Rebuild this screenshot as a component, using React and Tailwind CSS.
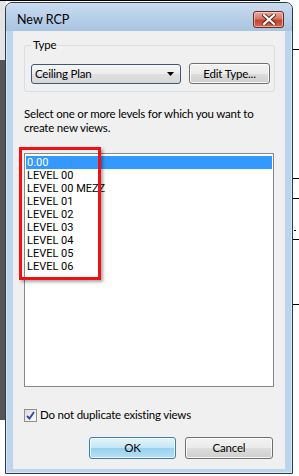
import React from "react";

const ui = { fontFamily: 'Lato, "Noto Sans", sans-serif' };
const listFont = { fontFamily: 'Roboto, "Liberation Sans", sans-serif' };

function Btn({ children, primary, className = "" }) {
  return (
    <div
      className={
        "flex items-center justify-center rounded-[3px] border text-black " +
        (primary
          ? "border-[#3c7fb1] bg-[linear-gradient(#e5f4fc_0%,#c4e5f6_50%,#98d1ef_51%,#b7e0f5_100%)] shadow-[inset_0_0_0_1px_rgba(255,255,255,0.7)] "
          : "border-[#707070] bg-[linear-gradient(#f2f2f2_0%,#ebebeb_50%,#dddddd_51%,#cfcfcf_100%)] shadow-[inset_0_0_0_1px_rgba(255,255,255,0.8)] ") +
        className
      }
    >
      {children}
    </div>
  );
}

export default function App() {
  const levels = [
    "0.00",
    "LEVEL 00",
    "LEVEL 00 MEZZ",
    "LEVEL 01",
    "LEVEL 02",
    "LEVEL 03",
    "LEVEL 04",
    "LEVEL 05",
    "LEVEL 06",
  ];
  return (
    <div className="relative h-[476px] w-[299px] overflow-hidden bg-white text-[11.5px] tracking-[-0.2px]" style={ui}>
      {/* desktop background pieces */}
      <div className="absolute left-0 top-0 h-[60px] w-[6px] bg-[#e4e4e4]" />
      <div className="absolute left-0 top-[60px] h-[360px] w-[6px] bg-[#575757]" />
      <div className="absolute left-0 top-0 h-px w-[280px] bg-black" />
      <div className="absolute right-0 top-[49px] h-px w-[7px] bg-black" />
      <div className="absolute right-0 top-[178px] h-px w-[7px] bg-black" />
      <div className="absolute right-0 top-[198px] h-px w-[7px] bg-black" />
      <div className="absolute right-[3px] top-[230px] h-px w-[2px] bg-black" />
      <div className="absolute right-0 top-[239px] h-px w-[7px] bg-black" />
      <div className="absolute right-0 top-[304px] h-px w-[7px] bg-black" />

      {/* window */}
      <div className="absolute left-[5px] top-[2px] flex h-[472px] w-[288px] flex-col rounded-t-[7px] border border-[#2a3a4a] bg-[#bcd4ec] shadow-[inset_0_0_0_1px_#d8e8f8]">
        {/* title bar */}
        <div className="flex h-[28px] shrink-0 items-start rounded-t-[6px] bg-[linear-gradient(#c9dbef,#a9c4e1)] pl-[11px]">
          <div className="mt-[8px] text-[12.5px] leading-[18px] tracking-normal text-black">New RCP</div>
          <div className="ml-auto mr-[8px] mt-[8px] flex h-[17px] w-[31px] items-center justify-center rounded-[3px] border border-[#6b2a22] bg-[linear-gradient(#e8a99c_0%,#d47867_45%,#c1432f_55%,#cf6a4e_100%)] shadow-[inset_0_0_0_1px_rgba(255,220,210,0.6)]">
            <svg width="14" height="11" viewBox="0 0 14 11">
              <path d="M2 1 L12 10 M12 1 L2 10" stroke="#5a2418" strokeWidth="4" strokeLinecap="square" />
              <path d="M2 1 L12 10 M12 1 L2 10" stroke="#ffffff" strokeWidth="2.2" strokeLinecap="square" />
            </svg>
          </div>
        </div>

        {/* client area */}
        <div className="mx-[7px] mb-[4px] flex flex-1 flex-col bg-[#f0f0f0] pl-[11px]">
          {/* group box */}
          <div className="relative mt-[14px] h-[47px] w-[251px] rounded-[3px] border border-[#d5dfe5]">
            <div className="absolute left-[6px] top-[-9px] bg-[#f0f0f0] px-[2px] leading-[16px] text-black">
              Type
            </div>
            <div className="ml-[6px] mt-[18px] flex items-start gap-[8px]">
              <div className="flex h-[20px] w-[150px] items-center rounded-[3px] border border-[#3c5a78] bg-[linear-gradient(#f6f6f6_0%,#ececec_50%,#e0e0e0_51%,#d8d8d8_100%)] pl-[3px] pr-[6px] text-black">
                <span className="leading-[16px]">Ceiling Plan</span>
                <svg className="ml-auto" width="7" height="4" viewBox="0 0 7 4">
                  <path d="M0 0 H7 L3.5 4 Z" fill="#000" />
                </svg>
              </div>
              <Btn className="-mt-px h-[21px] w-[81px]">Edit Type...</Btn>
            </div>
          </div>

          <div className="mt-[15px] whitespace-nowrap leading-[14px] text-black">
            <div>Select one or more levels for which you want to</div>
            <div>create new views.</div>
          </div>

          {/* list box */}
          <div className="relative mt-[18px] h-[234px] w-[250px] border border-[#828790] bg-white px-px pt-[2px] tracking-normal" style={listFont}>
            {levels.map((l, i) => (
              <div
                key={l}
                className={
                  "h-[13px] whitespace-nowrap pl-px text-[11px] leading-[13px] " +
                  (i === 0 ? "bg-[#3399ff] text-white" : "text-black")
                }
              >
                {l}
              </div>
            ))}
            <div className="absolute left-[-6px] top-[-7px] h-[133px] w-[82px] overflow-hidden border-[3px] border-[#ee1111] shadow-[2px_2px_3px_rgba(0,0,0,0.35)]" />
          </div>

          {/* checkbox */}
          <div className="mt-[21px] flex items-center gap-[3px] text-black">
            <div className="flex h-[13px] w-[13px] items-center justify-center border border-[#8f8f8f] bg-[linear-gradient(135deg,#dcdcdc,#fbfbfb)]">
              <svg width="9" height="9" viewBox="0 0 9 9">
                <path d="M1 5 L3.5 7.5 L8 1" stroke="#2c4a9a" strokeWidth="1.8" fill="none" />
              </svg>
            </div>
            <span className="leading-[14px]">Do not duplicate existing views</span>
          </div>

          {/* buttons */}
          <div className="mt-[15px] flex gap-[9px] pl-[65px]">
            <Btn primary className="h-[22px] w-[87px]">OK</Btn>
            <Btn className="h-[22px] w-[88px]">Cancel</Btn>
          </div>
        </div>
      </div>
    </div>
  );
}
